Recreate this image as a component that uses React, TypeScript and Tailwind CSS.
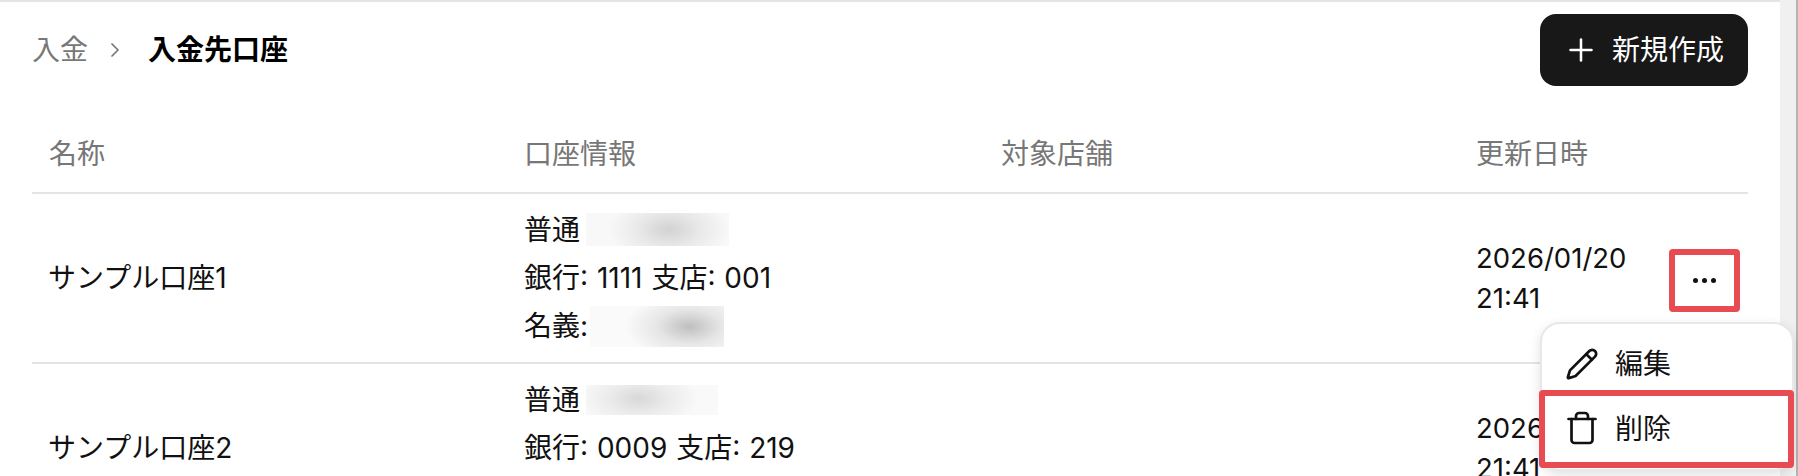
import { Pencil, Plus, Trash, ChevronRight } from 'lucide-react';

const font = "font-['Inter','Noto_Sans_CJK_JP',sans-serif]";

const gridCols = 'grid grid-cols-[475px_477px_475px_1fr]';

function BlurBox({ className }: { className: string }) {
  return <span className={`inline-block shrink-0 ${className}`} />;
}

function AccountRow({
  name,
  bank,
  branch,
  date,
  withActions,
  blurA,
  blurB,
}: {
  name: string;
  bank: string;
  branch: string;
  date: string;
  withActions?: boolean;
  blurA: string;
  blurB: string;
}) {
  return (
    <div className={`${gridCols} h-[170px] border-b-2 border-[#e4e4e4] text-[28px] leading-[40px] text-[#111111]`}>
      <div className="flex items-center px-4">{name}</div>
      <div className="flex flex-col justify-center gap-2 px-[17px]">
        <div className="flex items-center whitespace-nowrap">
          普通
          <BlurBox className={blurA} />
        </div>
        <div className="whitespace-nowrap [word-spacing:1px]">
          銀行: {bank} 支店: {branch}
        </div>
        <div className="flex items-center whitespace-nowrap">
          名義:
          <BlurBox className={blurB} />
        </div>
      </div>
      <div />
      <div className="flex items-center justify-between pl-[17px] pr-2">
        <div className="text-[27.5px]">
          <div>{date}</div>
          <div>21:41</div>
        </div>
        {withActions && (
          <button className="mt-[5px] flex h-[63px] w-[71px] items-center justify-center gap-[4px] rounded-[4px] border-[6px] border-[#e84b52]">
            <span className="h-[5px] w-[5px] rounded-full bg-[#111111]" />
            <span className="h-[5px] w-[5px] rounded-full bg-[#111111]" />
            <span className="h-[5px] w-[5px] rounded-full bg-[#111111]" />
          </button>
        )}
      </div>
    </div>
  );
}

export default function App() {
  return (
    <div className={`relative flex h-[476px] w-[1798px] overflow-hidden bg-white ${font}`}>
      <main className="h-full w-[1780px] shrink-0 border-t-2 border-[#e4e4e4] px-8 pt-3">
        {/* Header */}
        <div className="flex items-center justify-between">
          <div className="flex items-center text-[28px] leading-[40px] text-[#777777]">
            <span>入金</span>
            <ChevronRight className="ml-[15px] mr-[21px] h-[24px] w-[24px]" strokeWidth={1.75} />
            <span className="font-bold text-black">入金先口座</span>
          </div>
          <button className="flex h-[72px] w-[208px] items-center rounded-[16px] bg-[#181818] pl-[23px] text-[28px] text-white">
            <Plus className="h-[36px] w-[36px]" strokeWidth={1.7} />
            <span className="ml-[13px]">新規作成</span>
          </button>
        </div>

        {/* Table */}
        <div className={`${gridCols} mt-8 h-[76px] items-center border-b-2 border-[#e4e4e4] pb-[2px] text-[28px] text-[#777777]`}>
          <div className="px-[17px]">名称</div>
          <div className="px-[17px]">口座情報</div>
          <div className="px-[17px]">対象店舗</div>
          <div className="px-[17px]">更新日時</div>
        </div>
        <AccountRow
          name="サンプル口座1"
          bank="1111"
          branch="001"
          date="2026/01/20"
          withActions
          blurA="ml-[6px] h-[33px] w-[143px] bg-[radial-gradient(ellipse_60px_34px_at_58%_50%,#d2d2d2,#e8e8e8_50%,#f8f8f8_100%)]"
          blurB="ml-[2px] h-[41px] w-[134px] bg-[radial-gradient(ellipse_64px_34px_at_74%_50%,#bfbfbf,#e6e6e6_50%,#fafafa_100%)]"
        />
        <AccountRow
          name="サンプル口座2"
          bank="0009"
          branch="219"
          date="2026/01/20"
          blurA="ml-[6px] h-[30px] w-[132px] bg-[radial-gradient(ellipse_60px_30px_at_40%_45%,#d8d8d8,#ebebeb_50%,#f9f9f9_100%)]"
          blurB="ml-[2px] h-[41px] w-[134px]"
        />
      </main>

      {/* Scrollbar track */}
      <div className="h-full flex-1 border-r-2 border-[#b4b4b4] bg-[#f0f0f0]" />

      {/* Action menu */}
      <div className="absolute left-[1540px] top-[322px] w-[254px] rounded-[20px] border-2 border-[#e8e8e8] bg-white py-[8px] text-[28px] text-[#111111] shadow-[0_4px_12px_rgba(0,0,0,0.12)]">
        <div className="flex h-[64px] items-center pl-[22px]">
          <span className="flex w-[36px] justify-center">
            <Pencil className="h-[34px] w-[34px]" strokeWidth={1.9} />
          </span>
          <span className="ml-[15px]">編集</span>
        </div>
        <div className="relative flex h-[65px] items-center pl-[22px]">
          <span className="-mt-[2px] flex w-[36px] justify-center">
            <Trash className="h-[36px] w-[36px]" strokeWidth={1.8} />
          </span>
          <span className="ml-[15px]">削除</span>
          <div className="absolute -bottom-[7px] -left-[3px] -right-[2px] -top-[6px] rounded-[4px] border-[6px] border-[#e84b52]" />
        </div>
      </div>
    </div>
  );
}
